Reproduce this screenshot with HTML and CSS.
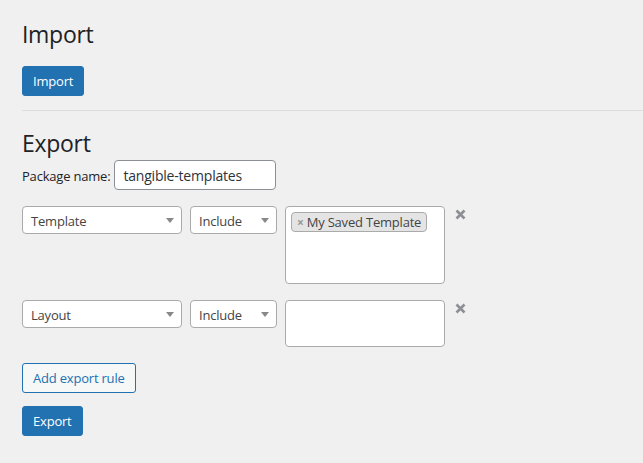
FILE: index.html
```html
<!DOCTYPE html>
<html>
<head>
<meta charset="utf-8">
<link rel="stylesheet" href="styles.css">
</head>
<body>
<div class="wrap">
  <section class="section">
    <h2 class="title">Import</h2>
    <button class="btn btn-primary">Import</button>
  </section>
  <hr class="divider">
  <section class="section">
    <h2 class="title title-export">Export</h2>
    <div class="package-row">
      <label class="label">Package name:</label>
      <input class="text-input" type="text" value="tangible-templates">
    </div>
    <div class="rules">
      <div class="rule">
        <div class="select select-type"><span>Template</span><i class="arrow"></i></div>
        <div class="select select-mode"><span>Include</span><i class="arrow"></i></div>
        <div class="multi multi-tall">
          <span class="tag"><span class="tag-x">×</span>My Saved Template</span>
        </div>
        <button class="remove" aria-label="Remove">
          <svg width="11" height="11" viewBox="0 0 11 11"><path d="M1.5 1.5 L9.5 9.5 M9.5 1.5 L1.5 9.5" stroke="#8c8f94" stroke-width="2.6" stroke-linecap="butt"/></svg>
        </button>
      </div>
      <div class="rule">
        <div class="select select-type"><span>Layout</span><i class="arrow"></i></div>
        <div class="select select-mode"><span>Include</span><i class="arrow"></i></div>
        <div class="multi multi-short"></div>
        <button class="remove" aria-label="Remove">
          <svg width="11" height="11" viewBox="0 0 11 11"><path d="M1.5 1.5 L9.5 9.5 M9.5 1.5 L1.5 9.5" stroke="#8c8f94" stroke-width="2.6" stroke-linecap="butt"/></svg>
        </button>
      </div>
    </div>
    <button class="btn btn-secondary">Add export rule</button>
    <div class="export-action">
      <button class="btn btn-primary">Export</button>
    </div>
  </section>
</div>
</body>
</html>
```

FILE: styles.css
```css
html, body {
  margin: 0;
  padding: 0;
  background: #f0f0f1;
}
body {
  font-family: "Open Sans", "Noto Sans", sans-serif;
  font-size: 13px;
  letter-spacing: -0.2px;
  color: #1d2327;
}
.wrap {
  padding: 18px 0 0 22px;
}
.title {
  font-size: 23px;
  font-weight: 400;
  line-height: 32px;
  margin: 0 0 16px 0;
  color: #1d2327;
  letter-spacing: -0.3px;
}
.btn {
  font-family: inherit;
  font-size: 13px;
  letter-spacing: -0.2px;
  line-height: 28px;
  height: 30px;
  padding: 0 10px;
  border-radius: 3px;
  cursor: pointer;
  display: inline-block;
  box-sizing: border-box;
}
.btn-primary {
  background: #2271b1;
  border: 1px solid #2271b1;
  color: #fff;
}
.btn-secondary {
  background: #f6f7f7;
  border: 1px solid #2271b1;
  color: #2271b1;
}
.divider {
  border: 0;
  border-top: 1px solid #dcdcde;
  margin: 14px 0 0 0;
  height: 0;
}
.title-export {
  margin: 16px 0 1px 0;
}
.package-row {
  display: flex;
  align-items: center;
  gap: 4px;
}
.label {
  color: #1d2327;
  padding-top: 1px;
}
.text-input {
  font-family: inherit;
  font-size: 14px;
  letter-spacing: -0.2px;
  color: #2c3338;
  width: 162px;
  height: 30px;
  box-sizing: border-box;
  border: 1px solid #8c8f94;
  border-radius: 4px;
  padding: 0 8px;
  background: #fff;
}
.rules {
  margin-top: 16px;
  display: flex;
  flex-direction: column;
  gap: 16px;
}
.rule {
  display: flex;
  align-items: flex-start;
  gap: 8px;
}
.select {
  position: relative;
  height: 28px;
  box-sizing: border-box;
  border: 1px solid #aaa;
  border-radius: 4px;
  background: #fff;
  color: #444;
  line-height: 24px;
  padding: 2px 0 0 8px;
}
.select-type { width: 160px; }
.select-mode { width: 87px; }
.arrow {
  position: absolute;
  right: 7px;
  top: 11px;
  width: 0;
  height: 0;
  border-left: 4px solid transparent;
  border-right: 4px solid transparent;
  border-top: 5px solid #888;
}
.multi {
  width: 160px;
  box-sizing: border-box;
  border: 1px solid #aaa;
  border-radius: 4px;
  background: #fff;
  padding: 5px 5px;
}
.multi-tall { height: 78px; }
.multi-short { height: 47px; }
.tag {
  display: inline-flex;
  align-items: center;
  height: 20px;
  box-sizing: border-box;
  background: #e4e4e4;
  border: 1px solid #aaa;
  border-radius: 4px;
  padding: 0 5px 0 5px;
  color: #444;
  font-size: 13px;
}
.tag-x {
  color: #999;
  font-weight: 700;
  font-size: 12px;
  margin-right: 3px;
}
.remove {
  display: block;
  background: none;
  border: 0;
  padding: 0;
  margin: 3px 0 0 2px;
  width: 11px;
  height: 11px;
  cursor: pointer;
}
.remove svg {
  display: block;
}
.btn-secondary {
  margin-top: 16px;
}
.export-action {
  margin-top: 13px;
}
```
